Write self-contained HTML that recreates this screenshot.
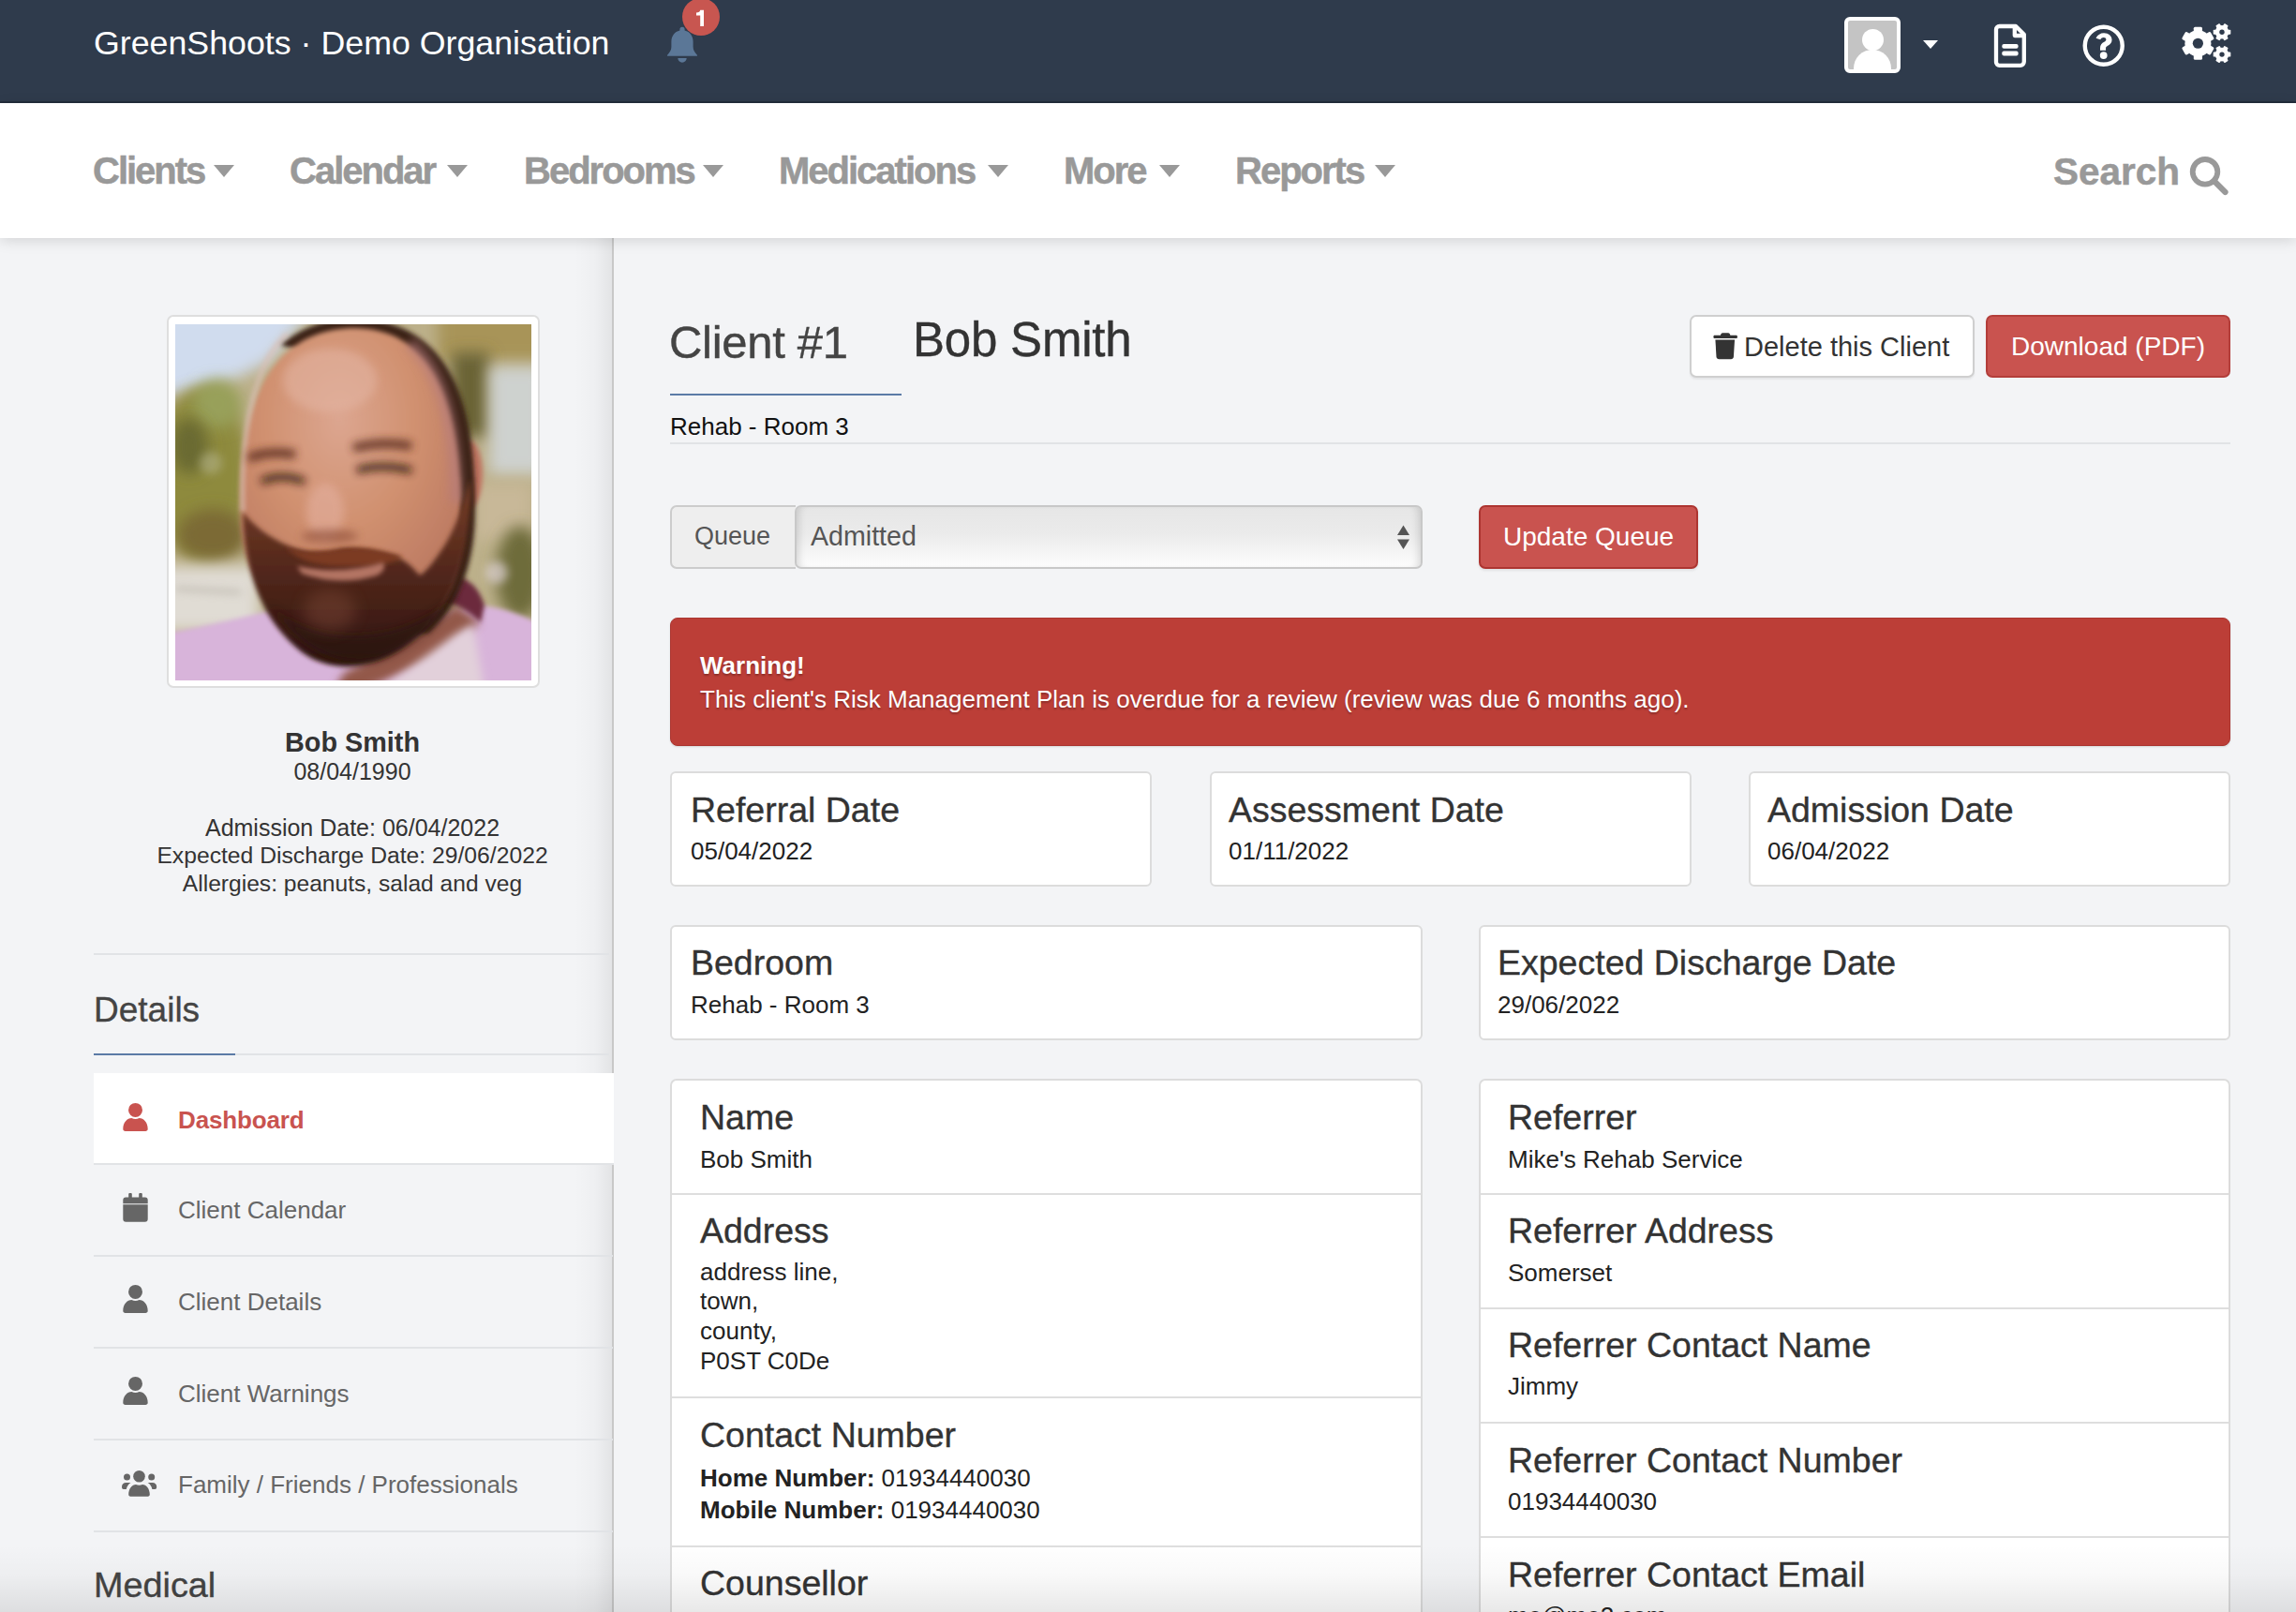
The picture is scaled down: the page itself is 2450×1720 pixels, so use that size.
<!DOCTYPE html>
<html>
<head>
<meta charset="utf-8">
<title>GreenShoots - Client #1 Bob Smith</title>
<style>
*{box-sizing:border-box;margin:0;padding:0}
html,body{width:2450px;height:1720px;overflow:hidden}
body{position:relative;background:#f3f4f6;font-family:"Liberation Sans",sans-serif;color:#333}
.abs{position:absolute;white-space:nowrap;line-height:1}
/* header */
#hdr{position:absolute;left:0;top:0;width:2450px;height:110px;background:#2f3b4c;border-bottom:2px solid #232d3b}
#nav{position:absolute;left:0;top:110px;width:2450px;height:144px;background:#fff;box-shadow:0 3px 14px rgba(0,0,0,.13);z-index:3}
.navi{position:absolute;top:0;font-weight:700;font-size:40px;letter-spacing:-2px;color:#999;line-height:1;-webkit-text-stroke:.5px #999}
.caret{position:absolute;width:0;height:0;border-left:11.5px solid transparent;border-right:11.5px solid transparent;border-top:13px solid #999}
/* sidebar */
#side{position:absolute;left:0;top:254px;width:655px;height:1466px}
#sideline{position:absolute;left:653px;top:254px;width:2px;height:1466px;background:#c8c8c8}
#sideshadow{position:absolute;left:613px;top:254px;width:40px;height:1466px;background:linear-gradient(to right,rgba(0,0,0,0) 0%,rgba(0,0,0,.018) 55%,rgba(0,0,0,.065) 100%)}
.hr{position:absolute;height:2px;background:#e1e3e6}
.menu{position:absolute;left:100px;width:554px;height:98px;border-bottom:2px solid #e1e3e6}
.menu .t{position:absolute;left:90px;font-size:26px;color:#666;line-height:1}
.menu svg{position:absolute}
/* main */
.card{position:absolute;background:#fff;border:2px solid #dcdcdc;border-radius:6px}
.h{position:absolute;font-size:37.5px;color:#333;line-height:1;white-space:nowrap;-webkit-text-stroke:.35px #333}
.v{position:absolute;font-size:26px;color:#222;line-height:1;white-space:nowrap}
.btn{position:absolute;border-radius:7px;line-height:1;white-space:nowrap}
#shade{position:absolute;left:0;top:1648px;width:2450px;height:72px;background:linear-gradient(to bottom,rgba(0,0,0,0) 0%,rgba(0,0,0,.025) 45%,rgba(0,0,0,.09) 100%);z-index:10;pointer-events:none}
</style>
</head>
<body>

<!-- ============ HEADER ============ -->
<div id="hdr">
  <div class="abs" style="left:100px;top:29.3px;font-size:35.75px;color:#fff">GreenShoots · Demo Organisation</div>
  <!-- bell -->
  <svg style="position:absolute;left:708px;top:26px" width="40" height="44" viewBox="0 0 40 44">
    <path d="M20 2.8a2.6 2.6 0 0 1 2.6 2.6v1.2c5.6 1.3 9 6 9 12v5.5c0 3.4 1.7 5.9 4.1 8.4c.8.8.3 1.3-.8 1.3H5.1c-1.1 0-1.6-.5-.8-1.3c2.4-2.5 4.1-5 4.1-8.4v-5.5c0-6 3.4-10.7 9-12v-1.2A2.6 2.6 0 0 1 20 2.8z" fill="#5b7797"/>
    <path d="M15.3 36h9.4a4.7 4.7 0 0 1-9.4 0z" fill="#5b7797"/>
  </svg>
  <div style="position:absolute;left:728px;top:-2px;width:40px;height:40px;border-radius:50%;background:#c85650"></div>
  <svg style="position:absolute;left:0;top:0" width="800" height="40" viewBox="0 0 800 40"><path d="M747.2 10.7H751V28h-3.8V16.4H743v-2.9c2.6-.1 3.9-1 4.2-2.8z" fill="#fff"/></svg>

  <!-- avatar -->
  <div style="position:absolute;left:1968px;top:18px;width:60px;height:60px;border:4px solid #fff;border-radius:6px;background:#c4c4c4;overflow:hidden">
    <div style="position:absolute;left:15px;top:9px;width:23px;height:23px;border-radius:50%;background:#fff"></div>
    <div style="position:absolute;left:6px;top:31px;width:40px;height:40px;border-radius:50% 50% 0 0;background:#fff"></div>
  </div>
  <div class="caret" style="left:2052px;top:43px;border-left-width:8px;border-right-width:8px;border-top:9px solid #fff"></div>
  <!-- document icon -->
  <svg style="position:absolute;left:2126px;top:24px" width="40" height="50" viewBox="0 0 40 50">
    <path d="M7.5 4H25l8.8 8.8V41.8a4 4 0 0 1-4 4H7.5a3.5 3.5 0 0 1-3.5-3.5V7.5A3.5 3.5 0 0 1 7.5 4z" fill="none" stroke="#fff" stroke-width="4.3" stroke-linejoin="round"/>
    <path d="M23.8 4v10h10" fill="none" stroke="#fff" stroke-width="4.3" stroke-linejoin="round"/>
    <rect x="10.3" y="22.9" width="17.3" height="4.8" rx="2" fill="#fff"/>
    <rect x="10.3" y="30.6" width="17.3" height="4.8" rx="2" fill="#fff"/>
  </svg>
  <!-- help icon -->
  <svg style="position:absolute;left:2220px;top:24px" width="50" height="50" viewBox="0 0 50 50">
    <circle cx="24.75" cy="24.75" r="20" fill="none" stroke="#fff" stroke-width="4.4"/>
    <path transform="translate(24.75 21) scale(1.12) translate(-24.75 -21)" d="M17.4 17.2c1.6-3 4.3-4.8 7.6-4.8c4.4 0 7.6 2.8 7.6 6.4c0 2.9-1.7 4.3-3.9 5.6c-1.4.8-1.9 1.4-1.9 2.6v1.8h-5.4v-2.2c0-3 1.6-4.6 3.8-5.8c1.3-.7 1.9-1.3 1.9-2.2c0-1.2-1-2-2.3-2c-1.5 0-2.4.8-3.2 2z" fill="#fff"/>
    <circle cx="24.7" cy="35.1" r="3.9" fill="#fff"/>
  </svg>
  <!-- gears -->
  <svg style="position:absolute;left:2320px;top:15px" width="70" height="65" viewBox="0 0 70 65">
    <g transform="translate(25.4 31.25)" fill="#fff">
      <circle r="14"/>
      <rect x="-4.6" y="-17.6" width="9.2" height="35.2" rx="1.5"/>
      <rect x="-4.6" y="-17.6" width="9.2" height="35.2" rx="1.5" transform="rotate(60)"/>
      <rect x="-4.6" y="-17.6" width="9.2" height="35.2" rx="1.5" transform="rotate(120)"/>
      <circle r="5.6" fill="#2f3b4c"/>
    </g>
    <g transform="translate(51 19.2)" fill="#fff">
      <circle r="7.3"/>
      <rect x="-2.5" y="-9.3" width="5" height="18.6" rx=".9" transform="rotate(30)"/>
      <rect x="-2.5" y="-9.3" width="5" height="18.6" rx=".9" transform="rotate(90)"/>
      <rect x="-2.5" y="-9.3" width="5" height="18.6" rx=".9" transform="rotate(150)"/>
      <circle r="2.7" fill="#2f3b4c"/>
    </g>
    <g transform="translate(51 43.1)" fill="#fff">
      <circle r="7.3"/>
      <rect x="-2.5" y="-9.3" width="5" height="18.6" rx=".9" transform="rotate(30)"/>
      <rect x="-2.5" y="-9.3" width="5" height="18.6" rx=".9" transform="rotate(90)"/>
      <rect x="-2.5" y="-9.3" width="5" height="18.6" rx=".9" transform="rotate(150)"/>
      <circle r="2.7" fill="#2f3b4c"/>
    </g>
  </svg>
</div>

<!-- ============ NAV ============ -->
<div id="nav">
  <div class="navi" style="left:99px;top:52px">Clients</div><div class="caret" style="left:228px;top:66px"></div>
  <div class="navi" style="left:309px;top:52px">Calendar</div><div class="caret" style="left:477px;top:66px"></div>
  <div class="navi" style="left:559px;top:52px">Bedrooms</div><div class="caret" style="left:750px;top:66px"></div>
  <div class="navi" style="left:831px;top:52px">Medications</div><div class="caret" style="left:1054px;top:66px"></div>
  <div class="navi" style="left:1135px;top:52px">More</div><div class="caret" style="left:1237px;top:66px"></div>
  <div class="navi" style="left:1318px;top:52px">Reports</div><div class="caret" style="left:1467px;top:66px"></div>
  <div class="navi" style="left:2191px;top:53px;letter-spacing:0;font-size:40.5px">Search</div>
  <svg style="position:absolute;left:2332px;top:53px" width="50" height="50" viewBox="0 0 50 50">
    <circle cx="21" cy="20.3" r="13.3" fill="none" stroke="#999" stroke-width="5.8"/>
    <path d="M30.5 30l12 12" stroke="#999" stroke-width="6.2" stroke-linecap="round"/>
  </svg>
</div>

<!-- ============ SIDEBAR ============ -->
<div id="side"></div>
<div id="sideshadow"></div>
<div id="sideline"></div>

<!-- photo -->
<div style="position:absolute;left:178px;top:336px;width:398px;height:398px;background:#fff;border:2px solid #dedede;border-radius:7px"></div>
<svg style="position:absolute;left:187px;top:346px" width="380" height="380" viewBox="0 0 380 380">
  <defs>
    <filter id="bl" filterUnits="userSpaceOnUse" x="-60" y="-60" width="500" height="500"><feGaussianBlur stdDeviation="5"/></filter>
    <filter id="bl2" filterUnits="userSpaceOnUse" x="-60" y="-60" width="500" height="500"><feGaussianBlur stdDeviation="2.5"/></filter>
    <filter id="bl3" filterUnits="userSpaceOnUse" x="-60" y="-60" width="500" height="500"><feGaussianBlur stdDeviation="8"/></filter>
    <radialGradient id="skin" cx="45%" cy="30%" r="70%">
      <stop offset="0" stop-color="#dca690"/>
      <stop offset="0.5" stop-color="#d0906f"/>
      <stop offset="1" stop-color="#b97660"/>
    </radialGradient>
    <linearGradient id="beard" x1="0" y1="0" x2="0" y2="1">
      <stop offset="0" stop-color="#7a4028"/>
      <stop offset="0.45" stop-color="#55291c"/>
      <stop offset="1" stop-color="#2e1410"/>
    </linearGradient>
    <clipPath id="pc"><rect width="380" height="380"/></clipPath>
  </defs>
  <g clip-path="url(#pc)">
    <rect width="380" height="380" fill="#bcb08a"/>
    <!-- sky left -->
    <path d="M-20 -20H150L100 40L60 60L-20 80z" fill="#d0dcee" filter="url(#bl3)"/>
    <!-- left trees -->
    <ellipse cx="28" cy="160" rx="52" ry="92" fill="#8e8a3c" filter="url(#bl3)"/>
    <ellipse cx="45" cy="85" rx="26" ry="26" fill="#98a05a" filter="url(#bl3)"/>
    <ellipse cx="15" cy="130" rx="20" ry="30" fill="#6a6a30" filter="url(#bl3)"/>
    <ellipse cx="40" cy="225" rx="38" ry="28" fill="#7c6a34" filter="url(#bl3)"/>
    <circle cx="38" cy="148" r="12" fill="#c0c0a0" opacity=".45" filter="url(#bl)"/>
    <!-- left ground -->
    <rect x="-20" y="258" width="110" height="70" fill="#e0dcd4" filter="url(#bl3)"/>
    <path d="M0 282 L70 286" stroke="#a09a90" stroke-width="4" opacity=".6" filter="url(#bl)"/>
    <!-- right background -->
    <rect x="280" y="-20" width="120" height="60" fill="#a89458" filter="url(#bl3)"/>
    <rect x="295" y="30" width="40" height="90" fill="#6a6434" filter="url(#bl3)"/>
    <rect x="335" y="45" width="60" height="115" fill="#d2d8dc" opacity=".85" filter="url(#bl3)"/>
    <rect x="320" y="170" width="60" height="60" fill="#c8b898" filter="url(#bl3)"/>
    <ellipse cx="368" cy="265" rx="26" ry="50" fill="#6e6c3a" filter="url(#bl3)"/>
    <circle cx="343" cy="265" r="12" fill="#e8dce4" opacity=".6" filter="url(#bl)"/>
    <!-- shirt -->
    <path d="M-10 330 Q50 318 100 306 L170 320 L240 320 L320 300 Q350 300 390 320 L390 390 L-10 390z" fill="#d8b4da" filter="url(#bl2)"/>
    <!-- neck -->
    <path d="M180 372 Q250 335 300 300 L325 318 Q300 340 275 360 L200 390 L170 390z" fill="#93584a" filter="url(#bl)"/><path d="M215 392 Q260 360 300 330 L318 320 L330 392z" fill="#e2d0da" filter="url(#bl)"/>
    <!-- collar highlight -->
    
    <!-- maroon collar -->
    <path d="M296 268 Q322 272 330 300 L326 318 Q306 300 288 296z" fill="#6c2a3c" filter="url(#bl2)"/>
    <!-- ear -->
    <ellipse cx="314" cy="160" rx="14" ry="36" fill="#c07462" filter="url(#bl2)"/>
    <!-- hair rim -->
    <path d="M112 22 C140 0 165 -6 192 -6 C285 -4 322 70 320 200 C320 250 305 300 270 330 L200 330 L180 40z" fill="#3a2218" filter="url(#bl2)"/>
    <!-- face skin -->
    <path d="M70 215 C64 70 110 6 190 4 C268 4 304 70 305 200 C306 255 292 300 262 322 L140 330 C100 300 73 260 70 215z" fill="url(#skin)" filter="url(#bl2)"/>
    <!-- mauve right edge -->
    <path d="M250 20 C285 50 300 110 300 190" stroke="#b47c80" stroke-width="14" fill="none" opacity=".55" filter="url(#bl)"/>
    <!-- left rim highlight -->
    <path d="M72 200 C68 90 95 30 120 10" stroke="#dcc0b8" stroke-width="5" fill="none" opacity=".7" filter="url(#bl2)"/>
    <!-- beard -->
    <path d="M72 200 C74 270 95 318 135 350 C168 374 215 368 250 340 C290 310 316 258 315 165 C308 190 300 215 288 235 C278 250 270 262 261 268 C252 258 246 252 236 248 C214 242 195 238 178 240 C158 246 138 244 120 236 C98 226 84 215 72 200z" fill="url(#beard)" filter="url(#bl2)"/>
    <!-- dark lower beard -->
    <path d="M100 298 C130 342 170 368 215 358 C250 346 285 316 300 288 C270 318 230 332 190 332 C150 332 120 318 100 298z" fill="#2a120e" opacity=".7" filter="url(#bl)"/>
    <!-- chin lighter -->
    <ellipse cx="165" cy="305" rx="28" ry="22" fill="#7e4838" opacity=".45" filter="url(#bl3)"/>
    <!-- mustache warm -->
    <path d="M118 238 C140 246 160 242 180 239 C200 237 218 240 242 248 C232 258 200 258 175 258 C150 258 132 252 118 238z" fill="#7c3a22" filter="url(#bl2)"/>
    <!-- lips -->
    <path d="M130 258 Q175 268 222 254 Q226 262 215 268 Q175 280 135 266z" fill="#b47464" filter="url(#bl2)"/>
    <!-- brows -->
    <path d="M78 143 Q100 134 128 139" stroke="#5a2a1c" stroke-width="9" fill="none" opacity=".9" filter="url(#bl)"/>
    <path d="M190 132 Q222 124 252 130" stroke="#5a2a1c" stroke-width="9" fill="none" opacity=".9" filter="url(#bl)"/>
    <!-- eyes -->
    <path d="M92 168 Q113 158 138 168" stroke="#2a120c" stroke-width="7" fill="none" opacity=".9" filter="url(#bl)"/>
    <path d="M194 156 Q220 148 252 156" stroke="#2a120c" stroke-width="7" fill="none" opacity=".9" filter="url(#bl)"/>
    <!-- nose -->
    <ellipse cx="160" cy="200" rx="20" ry="30" fill="#e4b0a0" opacity=".6" filter="url(#bl)"/>
    <ellipse cx="165" cy="226" rx="30" ry="7" fill="#8a4a36" opacity=".6" filter="url(#bl)"/>
    <!-- highlights -->
    <ellipse cx="165" cy="60" rx="50" ry="34" fill="#e4b6a4" opacity=".55" filter="url(#bl)"/>
  </g>
</svg>

<div class="abs" style="left:100px;width:552px;text-align:center;top:777.6px;font-size:28.8px;font-weight:700;color:#333">Bob Smith</div>
<div class="abs" style="left:100px;width:552px;text-align:center;top:810.8px;font-size:25px;color:#333">08/04/1990</div>
<div class="abs" style="left:100px;width:552px;text-align:center;top:871.2px;font-size:25px;color:#333">Admission Date: 06/04/2022</div>
<div class="abs" style="left:100px;width:552px;text-align:center;top:901.3px;font-size:24.7px;color:#333">Expected Discharge Date: 29/06/2022</div>
<div class="abs" style="left:100px;width:552px;text-align:center;top:930.5px;font-size:24.6px;color:#333">Allergies: peanuts, salad and veg</div>

<div class="hr" style="left:100px;top:1017px;width:550px"></div>
<div class="abs" style="left:100px;top:1058.7px;font-size:37px;color:#444;-webkit-text-stroke:.35px #444">Details</div>
<div class="hr" style="left:100px;top:1124px;width:550px"></div>
<div style="position:absolute;left:100px;top:1124px;width:151px;height:2px;background:#5b7ba6"></div>

<!-- menu -->
<div class="menu" style="top:1145px;background:#fff;width:555px;z-index:2">
  <svg style="left:31px;top:31px" width="28" height="32" viewBox="0 0 28 32">
    <circle cx="13.5" cy="8.4" r="7.5" fill="#c9534f"/>
    <path d="M0.3 28.5c0-6.8 4.5-11.4 9.2-11.4c1.3.6 2.6 1 4 1s2.7-.4 4-1c4.7 0 9.2 4.6 9.2 11.4c0 1.8-1.1 2.4-2.4 2.4H2.7c-1.3 0-2.4-.6-2.4-2.4z" fill="#c9534f"/>
  </svg>
  <div class="t" style="top:36.7px;font-weight:700;color:#c9534f;letter-spacing:-.15px">Dashboard</div>
</div>
<div class="menu" style="top:1243px">
  <svg style="left:31px;top:29px" width="28" height="32" viewBox="0 0 28 32">
    <rect x="6.2" y="0.9" width="3.6" height="6" rx="1.2" fill="#666"/>
    <rect x="17.2" y="0.9" width="3.6" height="6" rx="1.2" fill="#666"/>
    <path d="M0.3 8.6a3 3 0 0 1 3-3h20.4a3 3 0 0 1 3 3v3.7H0.3z" fill="#666"/>
    <path d="M0.3 13.2h26.4v15.5a3 3 0 0 1-3 3H3.3a3 3 0 0 1-3-3z" fill="#666"/>
  </svg>
  <div class="t" style="top:35px">Client Calendar</div>
</div>
<div class="menu" style="top:1341px">
  <svg style="left:31px;top:29px" width="28" height="32" viewBox="0 0 28 32">
    <circle cx="13.5" cy="8.4" r="7.5" fill="#666"/>
    <path d="M0.3 28.5c0-6.8 4.5-11.4 9.2-11.4c1.3.6 2.6 1 4 1s2.7-.4 4-1c4.7 0 9.2 4.6 9.2 11.4c0 1.8-1.1 2.4-2.4 2.4H2.7c-1.3 0-2.4-.6-2.4-2.4z" fill="#666"/>
  </svg>
  <div class="t" style="top:35px">Client Details</div>
</div>
<div class="menu" style="top:1439px">
  <svg style="left:31px;top:29px" width="28" height="32" viewBox="0 0 28 32">
    <circle cx="13.5" cy="8.4" r="7.5" fill="#666"/>
    <path d="M0.3 28.5c0-6.8 4.5-11.4 9.2-11.4c1.3.6 2.6 1 4 1s2.7-.4 4-1c4.7 0 9.2 4.6 9.2 11.4c0 1.8-1.1 2.4-2.4 2.4H2.7c-1.3 0-2.4-.6-2.4-2.4z" fill="#666"/>
  </svg>
  <div class="t" style="top:34.8px">Client Warnings</div>
</div>
<div class="menu" style="top:1537px">
  <svg style="left:29px;top:30px" width="40" height="30" viewBox="0 0 40 30">
    <circle cx="19.5" cy="8.2" r="6.3" fill="#666"/>
    <circle cx="6.5" cy="9.1" r="3.5" fill="#666"/>
    <circle cx="32.7" cy="9.1" r="3.5" fill="#666"/>
    <path d="M8.2 27.5c0-6 3.8-10.6 7.8-10.6c1.1.5 2.3.8 3.5.8s2.4-.3 3.5-.8c4 0 7.8 4.6 7.8 10.6c0 1.3-.8 2.2-2 2.2H10.2c-1.2 0-2-.9-2-2.2z" fill="#666"/>
    <path d="M1 19.5c0-3 1.8-4.5 4.5-4.5h5c-2.5 1.6-4 4-4.7 7H2.8c-1 0-1.8-.8-1.8-2.5z" fill="#666"/>
    <path d="M38.2 19.5c0-3-1.8-4.5-4.5-4.5h-5c2.5 1.6 4 4 4.7 7h3c1 0 1.8-.8 1.8-2.5z" fill="#666"/>
  </svg>
  <div class="t" style="top:33.5px">Family / Friends / Professionals</div>
</div>
<div class="abs" style="left:100px;top:1672.8px;font-size:37.8px;color:#444;-webkit-text-stroke:.35px #444">Medical</div>


<!-- ============ MAIN ============ -->
<div class="abs" style="left:714px;top:340.6px;font-size:49px;color:#444;letter-spacing:-.3px;-webkit-text-stroke:.4px #444">Client #1</div>
<div class="abs" style="left:974px;top:337.4px;font-size:51px;color:#333;letter-spacing:-.2px;-webkit-text-stroke:.4px #333">Bob Smith</div>
<div style="position:absolute;left:715px;top:420px;width:247px;height:2px;background:#5b7ba6"></div>
<div class="abs" style="left:715px;top:441.7px;font-size:26px;color:#111">Rehab - Room 3</div>
<div class="hr" style="left:715px;top:472px;width:1665px"></div>

<!-- delete button -->
<div class="btn" style="left:1803px;top:336px;width:304px;height:67px;background:#fff;border:2px solid #cfcfcf;box-shadow:0 2px 2px rgba(0,0,0,.06)">
  <svg style="position:absolute;left:22px;top:15px" width="28" height="32" viewBox="0 0 28 32">
    <path d="M9.6 2.2h7.4c.8 0 1.4.4 1.8 1l.6 1.5h6.2c.8 0 1.3.6 1.3 1.4v.6c0 .8-.5 1.4-1.3 1.4H2.7c-.8 0-1.3-.6-1.3-1.4v-.6c0-.8.5-1.4 1.3-1.4h6.2l.6-1.5c.4-.6 1-1 1.8-1z" fill="#333"/>
    <path d="M3.4 9.5h20.6l-1.1 18.2c-.1 1.5-1.3 2.5-2.8 2.5H7.3c-1.5 0-2.7-1-2.8-2.5z" fill="#333"/>
  </svg>
  <div class="abs" style="left:56px;top:17.5px;font-size:29px;color:#333">Delete this Client</div>
</div>
<!-- download button -->
<div class="btn" style="left:2119px;top:336px;width:261px;height:67px;background:#c9534f;border:2px solid #b33e3a">
  <div class="abs" style="left:25px;top:18.3px;font-size:28px;color:#fff">Download (PDF)</div>
</div>

<!-- queue -->
<div style="position:absolute;left:715px;top:539px;width:134px;height:68px;background:#eee;border:2px solid #ccc;border-right:0;border-radius:7px 0 0 7px"></div>
<div class="abs" style="left:741px;top:559.2px;font-size:27px;color:#555">Queue</div>
<div style="position:absolute;left:848px;top:539px;width:670px;height:68px;border:2px solid #c8c8c8;border-radius:7px;background:linear-gradient(to bottom,#e6e6e6 0%,#ebebeb 45%,#fdfdfd 100%);box-shadow:inset 8px 0 8px -6px rgba(0,0,0,.15),inset -8px 0 8px -6px rgba(0,0,0,.15)"></div>
<div class="abs" style="left:865px;top:558.3px;font-size:28.6px;color:#555">Admitted</div>
<svg style="position:absolute;left:1490px;top:559px" width="16" height="28" viewBox="0 0 16 28">
  <path d="M1 12L7.5 1.4L14 12z" fill="#555"/><path d="M1 16.4L7.5 27L14 16.4z" fill="#555"/>
</svg>
<div class="btn" style="left:1578px;top:539px;width:234px;height:68px;background:#c9534f;border:2px solid #ad3531;box-shadow:0 2px 3px rgba(0,0,0,.08)">
  <div class="abs" style="left:24px;top:18px;font-size:28px;color:#fff">Update Queue</div>
</div>

<!-- alert -->
<div style="position:absolute;left:715px;top:659px;width:1665px;height:137px;background:#bc3e37;border:1px solid #ab3530;border-radius:8px;box-shadow:0 1px 2px rgba(0,0,0,.12)"></div>
<div class="abs" style="left:747px;top:697px;font-size:26px;font-weight:700;color:#fff;text-shadow:0 2px 2px rgba(0,0,0,.25)">Warning!</div>
<div class="abs" style="left:747px;top:732.5px;font-size:26px;color:#fff;text-shadow:0 2px 2px rgba(0,0,0,.25)">This client's Risk Management Plan is overdue for a review (review was due 6 months ago).</div>

<!-- date cards -->
<div class="card" style="left:715px;top:823px;width:514px;height:123px"></div>
<div class="h" style="left:737px;top:845.7px">Referral Date</div>
<div class="v" style="left:737px;top:894.6px">05/04/2022</div>
<div class="card" style="left:1291px;top:823px;width:514px;height:123px"></div>
<div class="h" style="left:1311px;top:845.7px">Assessment Date</div>
<div class="v" style="left:1311px;top:894.6px">01/11/2022</div>
<div class="card" style="left:1866px;top:823px;width:514px;height:123px"></div>
<div class="h" style="left:1886px;top:845.7px">Admission Date</div>
<div class="v" style="left:1886px;top:894.6px">06/04/2022</div>

<div class="card" style="left:715px;top:987px;width:803px;height:123px"></div>
<div class="h" style="left:737px;top:1009.3px">Bedroom</div>
<div class="v" style="left:737px;top:1058.6px">Rehab - Room 3</div>
<div class="card" style="left:1578px;top:987px;width:802px;height:123px"></div>
<div class="h" style="left:1598px;top:1009.3px">Expected Discharge Date</div>
<div class="v" style="left:1598px;top:1058.6px">29/06/2022</div>

<!-- detail panels -->
<div class="card" style="left:715px;top:1151px;width:803px;height:700px;border-radius:7px"></div>
<div class="hr" style="left:717px;top:1272.5px;width:799px;background:#dedede"></div>
<div class="hr" style="left:717px;top:1490px;width:799px;background:#dedede"></div>
<div class="hr" style="left:717px;top:1648.7px;width:799px;background:#dedede"></div>
<div class="h" style="left:747px;top:1174.3px">Name</div>
<div class="v" style="left:747px;top:1223.5px">Bob Smith</div>
<div class="h" style="left:747px;top:1295.3px">Address</div>
<div class="v" style="left:747px;line-height:31.8px;top:1341.7px;white-space:pre">address line,
town,
county,
P0ST C0De</div>
<div class="h" style="left:747px;top:1513.3px">Contact Number</div>
<div class="v" style="left:747px;top:1564px"><b>Home Number:</b> 01934440030</div>
<div class="v" style="left:747px;top:1597.6px"><b>Mobile Number:</b> 01934440030</div>
<div class="h" style="left:747px;top:1671px">Counsellor</div>

<div class="card" style="left:1578px;top:1151px;width:802px;height:700px;border-radius:7px"></div>
<div class="hr" style="left:1580px;top:1272.5px;width:798px;background:#dedede"></div>
<div class="hr" style="left:1580px;top:1394.5px;width:798px;background:#dedede"></div>
<div class="hr" style="left:1580px;top:1516.6px;width:798px;background:#dedede"></div>
<div class="hr" style="left:1580px;top:1638.8px;width:798px;background:#dedede"></div>
<div class="h" style="left:1609px;top:1174.3px">Referrer</div>
<div class="v" style="left:1609px;top:1223.5px">Mike's Rehab Service</div>
<div class="h" style="left:1609px;top:1295.3px">Referrer Address</div>
<div class="v" style="left:1609px;top:1344.6px">Somerset</div>
<div class="h" style="left:1609px;top:1417.3px">Referrer Contact Name</div>
<div class="v" style="left:1609px;top:1466px">Jimmy</div>
<div class="h" style="left:1609px;top:1539.6px">Referrer Contact Number</div>
<div class="v" style="left:1609px;top:1589px">01934440030</div>
<div class="h" style="left:1609px;top:1661.8px">Referrer Contact Email</div>
<div class="v" style="left:1609px;top:1711px">me@me2.com</div>


<div id="shade"></div>
</body>
</html>
